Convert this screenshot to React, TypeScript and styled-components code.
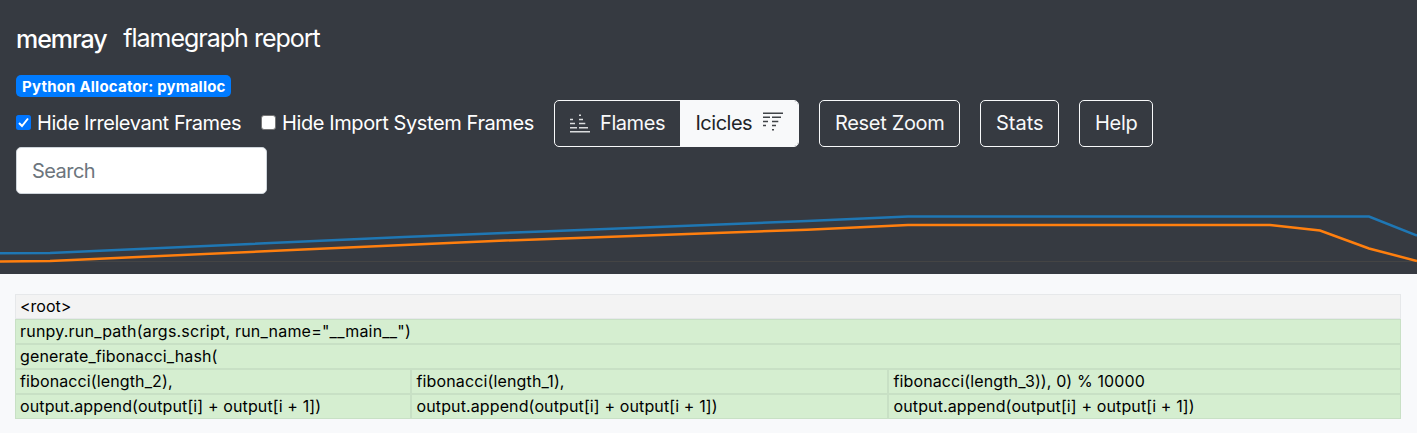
import React from "react";
import styled, { createGlobalStyle } from "styled-components";

const Global = createGlobalStyle`
  *, *::before, *::after { box-sizing: border-box; }
  body {
    margin: 0;
    background: #f8f9fb;
    font-family: Inter, "Liberation Sans", sans-serif;
    font-size: 20px;
    line-height: 30px;
    overflow: hidden;
  }
`;

const Header = styled.header`
  height: 274px;
  background: #363a41;
  color: #fff;
  display: flex;
  flex-direction: column;
`;

const Brand = styled.div`
  display: flex;
  gap: 16.5px;
  height: 38px;
  margin: 20px 16px 0;
  font-size: 25px;
  line-height: 38px;
  white-space: nowrap;
`;

const Text = styled.span<{ $spacing?: number }>`
  letter-spacing: ${(p) => p.$spacing ?? 0}px;
  white-space: pre;
`;

const Name = styled(Text)`
  font-weight: 500;
`;

const Title = styled(Text)`
  line-height: 36px;
`;

const Badge = styled.span`
  align-self: flex-start;
  height: 22px;
  width: 215px;
  margin: 17px 0 0 16px;
  padding: 0 6px;
  border-radius: 5px;
  background: #007bff;
  font-size: 15px;
  font-weight: 700;
  line-height: 23px;
  white-space: nowrap;
`;

const Controls = styled.div`
  display: flex;
  align-items: center;
  height: 47px;
  margin: 3px 0 0 16px;
`;

const Check = styled.label<{ $width: number }>`
  display: flex;
  align-items: center;
  gap: 6px;
  width: ${(p) => p.$width}px;
  height: 29px;
  line-height: 28px;
  flex: none;
  margin-bottom: 2px;
`;

const Box = styled.svg`
  flex: none;
  width: 15px;
  height: 15px;
`;

const Group = styled.div`
  display: flex;
  width: 245px;
  height: 47px;
  border: 1px solid #f8f9fa;
  border-radius: 5px;
  overflow: hidden;
`;

const Segment = styled.button<{ $active?: boolean; $width: number }>`
  display: flex;
  align-items: center;
  gap: ${(p) => (p.$active ? 10.5 : 10)}px;
  width: ${(p) => p.$width}px;
  padding: 0 0 2px ${(p) => (p.$active ? 15.5 : 15)}px;
  border: 0;
  font: inherit;
  background: ${(p) => (p.$active ? "#f8f9fa" : "transparent")};
  color: ${(p) => (p.$active ? "#212529" : "#f8f9fa")};
`;

const Icon = styled.svg`
  flex: none;
  width: 20px;
  height: 21px;
  opacity: 0.85;
`;

const Button = styled.button<{ $width: number }>`
  width: ${(p) => p.$width}px;
  height: 47px;
  margin-left: 20px;
  padding: 0 0 2px 15px;
  border: 1px solid #f8f9fa;
  border-radius: 5px;
  background: transparent;
  color: #f8f9fa;
  font: inherit;
  text-align: left;
`;

const Search = styled.input`
  width: 251px;
  height: 47px;
  margin-left: 16px;
  padding: 0 15px;
  border: 1px solid #ced4da;
  border-radius: 5px;
  background: #fff;
  font: inherit;
  letter-spacing: -0.55px;
  &::placeholder { color: #6c757d; opacity: 1; }
`;

const Plot = styled.svg`
  display: block;
  width: 1417px;
  height: 80px;
`;

const Graph = styled.main`
  width: 1386px;
  margin: 20px 0 0 15px;
  font-size: 16px;
`;

const Row = styled.div`
  display: flex;
`;

const Frame = styled.div<{ $root?: boolean; $width: number }>`
  width: ${(p) => p.$width}px;
  height: 25px;
  padding-left: 5px;
  line-height: 25px;
  color: #000;
  background: ${(p) => (p.$root ? "#f3f3f3" : "#d5eed0")};
  box-shadow: inset 0 0 0 1px ${(p) => (p.$root ? "#e6e8ea" : "#c8e0c5")};
  & + & { padding-left: 5.5px; }
`;

const append = "output.append(output[i] + output[i + 1])";

const rows: [string, number, number][][] = [
  [["<root>", 1386, 0]],
  [['runpy.run_path(args.script, run_name="__main__")', 1386, 0.21]],
  [["generate_fibonacci_hash(", 1386, 0.13]],
  [["fibonacci(length_2),", 396, 0.12], ["fibonacci(length_1),", 477, 0.14], ["fibonacci(length_3)), 0) % 10000", 513, 0.12]],
  [[append, 396, 0.12], [append, 477, 0.12], [append, 513, 0.12]],
];

const Bars = ({ flip }: { flip?: boolean }) => (
  <Icon viewBox="0 0 20 21" stroke="currentColor" strokeWidth="1.5">
    <g transform={flip ? "translate(0 21) scale(1 -1)" : undefined}>
      <path d="M0 19.7h20M0 15.8h7M9 15.8h9M0 11.6h5M9 11.6h6.3M0 7.4h3M9 7.4h4M9 3.2h2" />
    </g>
  </Icon>
);

export default function App() {
  return (
    <>
      <Global />
      <Header>
        <Brand>
          <Name $spacing={-1.03}>memray</Name>
          <Title $spacing={-1}>flamegraph report</Title>
        </Brand>
        <Badge><Text $spacing={0.21}>Python Allocator: pymalloc</Text></Badge>
        <Controls>
          <Check $width={245}>
            <Box viewBox="0 0 15 15">
              <rect width="15" height="15" rx="2.5" fill="#0075ff" />
              <path d="M3 8l3 3 6-7.5" fill="none" stroke="#fff" strokeWidth="2" />
            </Box>
            <Text $spacing={-0.43}>Hide Irrelevant Frames</Text>
          </Check>
          <Check $width={293}>
            <Box viewBox="0 0 15 15">
              <rect x=".5" y=".5" width="14" height="14" rx="2.5" fill="#fff" stroke="#767676" />
            </Box>
            <Text $spacing={-0.4}>Hide Import System Frames</Text>
          </Check>
          <Group>
            <Segment $width={125}><Bars /><Text $spacing={-0.42}>Flames</Text></Segment>
            <Segment $width={118} $active><Text $spacing={-0.5}>Icicles</Text><Bars flip /></Segment>
          </Group>
          <Button $width={141}><Text $spacing={-0.33}>Reset Zoom</Text></Button>
          <Button $width={79}><Text>Stats</Text></Button>
          <Button $width={74}><Text $spacing={-0.3}>Help</Text></Button>
        </Controls>
        <Search placeholder="Search" />
        <Plot viewBox="0 194 1417 80" fill="none" strokeWidth="2.5">
          <path d="M0 261.5H1417" stroke="#444" strokeWidth="1" />
          <path d="M0 253.3L50 253L404 237L555 231L807 221L908 216.5H1369L1417 235.5" stroke="#1f77b4" />
          <path d="M0 261.4L50 261L303 249.5L505 240.5L807 229.7L908 225H1270L1320 230.5L1369 248.5L1417 261" stroke="#ff7f0e" />
        </Plot>
      </Header>
      <Graph>
        {rows.map((row, i) => (
          <Row key={i}>
            {row.map(([label, width, spacing], j) => (
              <Frame key={j} $root={i === 0} $width={width}><Text $spacing={spacing}>{label}</Text></Frame>
            ))}
          </Row>
        ))}
      </Graph>
    </>
  );
}
